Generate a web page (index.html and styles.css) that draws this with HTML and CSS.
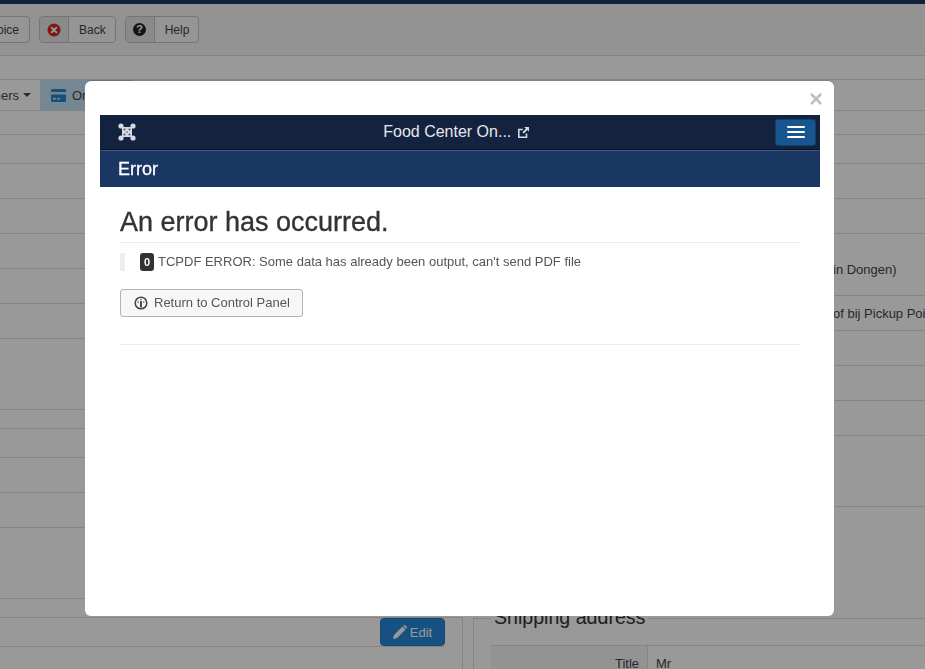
FILE: index.html
```
<!DOCTYPE html>
<html lang="en">
<head>
<meta charset="utf-8">
<title>Food Center Online - Error</title>
<link rel="stylesheet" href="styles.css">
</head>
<body>
<div class="page">
  <div class="topbar"></div>
  <div class="toolbar">
    <button class="btn btn-first">Invoice</button>
    <button class="btn btn-group">
      <span class="btn-icon"><svg width="14" height="14" viewBox="0 0 14 14"><circle cx="7" cy="7" r="6.5" fill="#d62828"/><path d="M4.6 4.6l4.8 4.8M9.4 4.6l-4.8 4.8" stroke="#fff" stroke-width="1.8" stroke-linecap="round"/></svg></span>
      <span class="btn-label">Back</span>
    </button>
    <button class="btn btn-group">
      <span class="btn-icon"><span class="help-dot">?</span></span>
      <span class="btn-label">Help</span>
    </button>
  </div>
  <div class="subbar"></div>
  <div class="tabs">
    <span class="tab-drop">Customers <i class="caret"></i></span>
    <span class="tab-active">
      <svg width="15" height="13" viewBox="0 0 15 13"><path d="M1.5 0h12A1.5 1.5 0 0 1 15 1.5V3H0V1.500A1.500 1.500 0 0 1 1.500 0zM0 5.500h15v6A1.500 1.500 0 0 1 13.500 13h-12A1.500 1.500 0 0 1 0 11.500zM2 9v1.500h3V9zm4 0v1.500h3V9z" fill="#2a84cc"/></svg>
      Orders
    </span>
  </div>
  <div class="columns">
    <div class="col-left">
      <div class="row h24"></div>
      <div class="row h29"></div>
      <div class="row h35"></div>
      <div class="row h35"></div>
      <div class="row h35"></div>
      <div class="row h35"></div>
      <div class="row h35"></div>
      <div class="row h71"></div>
      <div class="row h19"></div>
      <div class="row h29"></div>
      <div class="row h35"></div>
      <div class="row h35"></div>
      <div class="row h71"></div>
      <div class="row h19"></div>
      <div class="edit-panel">
        <div class="edit-row"><button class="btn-edit"><svg width="14" height="14" viewBox="0 0 14 14"><path d="M0 14l.8-3.800L9.500 1.500l3 3-8.700 8.700zM10.500.5a1.400 1.400 0 0 1 2 0l1 1a1.400 1.400 0 0 1 0 2l-.3.300-3-3z" fill="#fff"/></svg>Edit</button></div>
      </div>
    </div>
    <div class="col-right">
      <div class="row h24"></div>
      <div class="row h29"></div>
      <div class="row h35"></div>
      <div class="row h35"></div>
      <div class="row h62 cell-text cell-low">in Dongen)</div>
      <div class="row h35 cell-text">of bij Pickup Point</div>
      <div class="row h35"></div>
      <div class="row h35"></div>
      <div class="row h35"></div>
      <div class="row h71"></div>
      <div class="spacer"></div>
      <fieldset class="shipping">
        <legend>Shipping address</legend>
        <div class="ship-gap"></div>
        <div class="ship-row"><span class="ship-th">Title</span><span class="ship-td">Mr</span></div>
      </fieldset>
    </div>
  </div>
</div>

<div class="overlay">
  <div class="modal">
    <button class="close">&times;</button>
    <div class="navbar">
      <svg class="logo" width="18" height="18" viewBox="0 0 18 18">
        <rect x="4" y="4" width="10" height="10" fill="#d5d9df"/>
        <circle cx="3" cy="3" r="2.600" fill="#d5d9df"/><circle cx="15" cy="3" r="2.600" fill="#d5d9df"/><circle cx="3" cy="15" r="2.600" fill="#d5d9df"/><circle cx="15" cy="15" r="2.600" fill="#d5d9df"/>
        <g fill="#4a5670"><circle cx="6.500" cy="6.500" r="1"/><circle cx="11.500" cy="6.500" r="1"/><circle cx="6.500" cy="11.500" r="1"/><circle cx="11.500" cy="11.500" r="1"/><circle cx="9" cy="9" r=".8"/></g>
      </svg>
      <span class="site-title">Food Center On...
        <svg class="ext" width="11" height="11" viewBox="0 0 11 11"><path d="M8.500 6.500V10.200H.8V2.500h4" fill="none" stroke="#d5d9df" stroke-width="1.600"/><path d="M6.200 0h4.800v4.800L9.300 3.100 5.800 6.600 4.400 5.200 7.900 1.700z" fill="#d5d9df"/></svg>
      </span>
      <button class="burger"><i></i><i></i><i></i></button>
    </div>
    <div class="subhead">Error</div>
    <div class="content">
      <h1>An error has occurred.</h1>
      <blockquote class="message"><span class="badge">0</span> TCPDF ERROR: Some data has already been output, can't send PDF file</blockquote>
      <button class="btn-return">
        <svg width="14" height="14" viewBox="0 0 14 14"><circle cx="7" cy="7" r="5.800" fill="none" stroke="#444" stroke-width="1.500"/><circle cx="4.200" cy="6" r=".8" fill="#444"/><circle cx="9.800" cy="6" r=".8" fill="#444"/><circle cx="7" cy="3.800" r=".8" fill="#444"/><path d="M7 6v4.500" stroke="#444" stroke-width="2" stroke-linecap="round"/></svg>
        Return to Control Panel
      </button>
      <hr class="rule">
    </div>
  </div>
</div>
</body>
</html>
```

FILE: styles.css
```
* { box-sizing: border-box; }
html, body { margin: 0; height: 669px; overflow: hidden; background: #fff; }
body { font-family: "Liberation Sans", Arial, sans-serif; font-size: 13px; color: #333; }
button { font-family: inherit; }

.page { width: 925px; height: 669px; overflow: hidden; }
.topbar { height: 4px; background: #1a3867; }
.toolbar { height: 52px; background: #f5f5f5; border-bottom: 1px solid #ddd; padding-top: 12px; display: flex; gap: 9px; align-items: flex-start; }
.btn { height: 27px; background: #f8f8f8; border: 1px solid #c4c4c4; border-radius: 4px; font-size: 12px; color: #444; padding: 0; }
.btn-first { width: 100px; margin-left: -70px; text-align: right; padding-right: 10px; }
.btn-group { display: flex; align-items: stretch; }
.btn-icon { width: 29px; background: #e6e6e6; border-right: 1px solid #c4c4c4; border-radius: 3px 0 0 3px; display: flex; align-items: center; justify-content: center; }
.btn-label { padding: 0 9px 0 10px; display: flex; align-items: center; }
.help-dot { width: 13px; height: 13px; border-radius: 50%; background: #222; color: #fff; font-size: 11px; font-weight: bold; line-height: 13px; text-align: center; }
.subbar { height: 23px; background: #fff; }
.tabs { height: 32px; border-top: 1px solid #ddd; border-bottom: 1px solid #ddd; display: flex; }
.tab-drop { width: 40px; display: flex; align-items: center; justify-content: flex-end; gap: 4px; padding-right: 9px; white-space: nowrap; overflow: hidden; color: #444; }
.caret { flex: none; width: 0; height: 0; border-left: 4px solid transparent; border-right: 4px solid transparent; border-top: 4px solid #444; }
.tab-active { width: 93px; background: #c4e2f5; display: flex; align-items: center; gap: 6px; padding-left: 11px; color: #444; }

.columns { display: grid; grid-template-columns: 463px 452px; gap: 10px; }
.row { border-bottom: 1px solid #ddd; }
.h19 { height: 19px; }
.h24 { height: 24px; }
.h29 { height: 29px; }
.h35 { height: 35px; }
.h62 { height: 62px; }
.h71 { height: 71px; }
.cell-text { padding-left: 360px; white-space: nowrap; display: flex; align-items: center; color: #444; }
.cell-low { padding-top: 9px; }

.edit-panel { border-right: 1px solid #ddd; height: 60px; padding-right: 17px; }
.edit-row { height: 29px; border-bottom: 1px solid #ddd; display: flex; justify-content: flex-end; align-items: flex-start; }
.btn-edit { width: 65px; height: 28px; background: #2588d8; border: 1px solid #2078c0; border-radius: 4px; color: #fff; font-size: 13px; display: flex; align-items: center; justify-content: center; gap: 3px; padding: 0; }

.spacer { height: 96px; }
.shipping { margin: 0; padding: 0 0 0 17px; border: 0; border-top: 1px solid #ddd; border-left: 1px solid #ddd; min-width: 0; height: 81px; }
.shipping legend { font-size: 19.6px; line-height: 28px; padding: 0 3px 2px; margin-left: 0; }
.ship-gap { height: 13px; border-bottom: 1px solid #ddd; }
.ship-row { display: flex; height: 35px; }
.ship-th { width: 157px; flex: none; background: #f5f5f5; border-right: 1px solid #ddd; text-align: right; padding: 10px 8px 0 0; color: #444; }
.ship-td { padding: 10px 0 0 8px; color: #444; }

.overlay { position: fixed; inset: 0; background: rgba(0, 0, 0, .4); }
.modal { position: absolute; left: 85px; top: 81px; width: 749px; height: 535px; background: #fff; border-radius: 6px; box-shadow: 0 -1px 0 rgba(0, 0, 0, .15); padding: 34px 14px 0 15px; }
.close { position: absolute; top: 6px; right: 11px; background: none; border: 0; padding: 0; font-size: 24px; line-height: 24px; font-weight: bold; color: #000; opacity: .25; }
.navbar { height: 35px; background: #13233f; border-bottom: 1px solid #0a1528; display: flex; align-items: center; padding: 0 4px 0 18px; }
.logo { flex: none; }
.site-title { flex: 1; text-align: center; color: #e6e8ec; font-size: 16px; padding-left: 1px; }
.ext { margin-left: 2px; vertical-align: -1px; }
.burger { flex: none; width: 41px; height: 27px; background: #17568f; border: 1px solid #123f6e; border-radius: 3px; display: flex; flex-direction: column; align-items: center; justify-content: center; gap: 3px; padding: 0; }
.burger i { display: block; width: 18px; height: 2px; background: #fff; border-radius: 1px; }
.subhead { height: 37px; background: #1a3764; border-top: 1px solid #3a5a85; color: #fff; font-size: 18px; -webkit-text-stroke: .3px #fff; padding-left: 18px; line-height: 36px; }
.content { padding: 0 20px; }
h1 { margin: 0; padding: 20px 0 5px; border-bottom: 1px solid #eee; font-size: 27px; line-height: 30px; font-weight: normal; color: #333; -webkit-text-stroke: .35px #333; height: 56px; }
.message { margin: 10px 0 0; border-left: 5px solid #eee; padding-left: 15px; height: 18px; font-size: 13px; line-height: 18px; color: #555; display: flex; gap: 4px; align-items: center; }
.badge { width: 14px; height: 18px; background: #333; color: #fff; border-radius: 3px; font-size: 11px; font-weight: bold; text-align: center; line-height: 18px; }
.btn-return { display: flex; align-items: center; gap: 6px; margin-top: 18px; width: 183px; height: 28px; padding: 0 0 1px 13px; background: #f7f7f7; border: 1px solid #b3b3b3; border-radius: 3px; font-size: 13px; color: #555; }
.rule { border: 0; border-top: 1px solid #eee; margin: 27px 0 0; }
```
